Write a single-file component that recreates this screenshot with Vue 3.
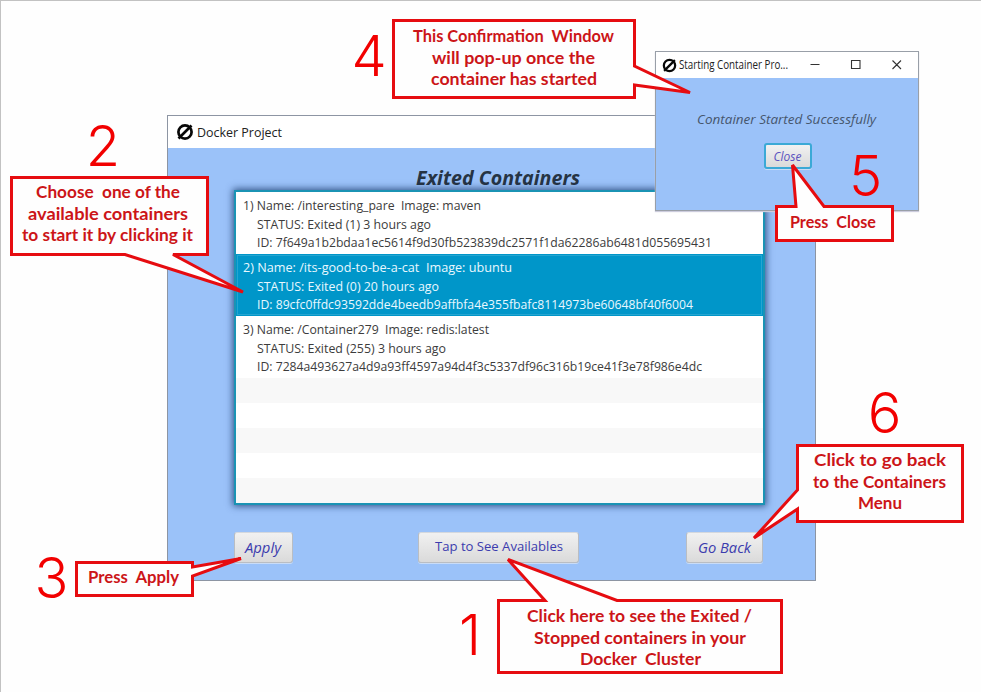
<script setup>
const containers = [
  {
    head: '1) Name: /interesting_pare  Image: maven',
    status: 'STATUS: Exited (1) 3 hours ago',
    id: 'ID: 7f649a1b2bdaa1ec5614f9d30fb523839dc2571f1da62286ab6481d055695431',
    widths: [238, 174, 455]
  },
  {
    head: '2) Name: /its-good-to-be-a-cat  Image: ubuntu',
    status: 'STATUS: Exited (0) 20 hours ago',
    id: 'ID: 89cfc0ffdc93592dde4beedb9affbfa4e355fbafc8114973be60648bf40f6004',
    widths: [269, 182, 436],
    selected: true
  },
  {
    head: '3) Name: /Container279  Image: redis:latest',
    status: 'STATUS: Exited (255) 3 hours ago',
    id: 'ID: 7284a493627a4d9a93ff4597a94d4f3c5337df96c316b19ce41f3e78f986e4dc',
    widths: [246, 189, 445]
  }
]

const rowLines = (c) => [
  { text: c.head, x: 7, y: 18, w: c.widths[0] },
  { text: c.status, x: 21, y: 37, w: c.widths[1] },
  { text: c.id, x: 21, y: 55, w: c.widths[2] }
]

const callouts = [
  {
    step: '1', sx: 469, sy: 655,
    path: 'M498.5 600.5H545L508 559.5L617 600.5H781.5V672.5H498.5Z',
    lines: [
      ['Click here to see the Exited /', 527, 622, 225],
      ['Stopped containers in your', 534, 644, 212],
      ['Docker  Cluster', 580, 665, 121]
    ]
  },
  {
    step: '2', sx: 102, sy: 166,
    path: 'M11.5 177.5H207.5V254.5H173L243 292L125 254.5H11.5Z',
    lines: [
      ['Choose  one of the', 36, 198, 144],
      ['available containers', 28, 220, 160],
      ['to start it by clicking it', 22, 241, 171]
    ]
  },
  {
    step: '3', sx: 50.5, sy: 598,
    path: 'M76.5 562.5H192.5V567L241 558.5L192.5 576V595.5H76.5Z',
    lines: [['Press  Apply', 88, 583, 91]]
  },
  {
    step: '4', sx: 368, sy: 76,
    path: 'M393.5 20.5H634.5V66L690 92.5L634.5 85V97.5H393.5Z',
    lines: [
      ['This Confirmation  Window', 413, 42, 201],
      ['will pop-up once the', 432, 64, 163],
      ['container has started', 431, 85, 166]
    ]
  },
  {
    step: '5', sx: 864.5, sy: 196,
    path: 'M776.5 206.5H796L792.5 165L824 206.5H892.5V240.5H776.5Z',
    lines: [['Press  Close', 790, 228, 86]]
  },
  {
    step: '6', sx: 883.5, sy: 433,
    path: 'M797.5 445.5H962.5V521.5H797.5V509L754 538L797.5 490Z',
    lines: [
      ['Click to go back', 814, 466, 132],
      ['to the Containers', 813, 488, 133],
      ['Menu', 858, 509, 44]
    ]
  }
]
</script>

<template>
  <main class="canvas">
    <section class="window main-window">
      <header class="titlebar">
        <svg class="logo" width="18" height="18" viewBox="0 0 18 18"><circle cx="9" cy="9" r="6.6" /><path d="M2.500 15.500L15.500 2.500" /></svg>
        <svg class="label" width="90" height="20"><text x="0" y="14.500" textLength="85" lengthAdjust="spacingAndGlyphs">Docker Project</text></svg>
      </header>
      <div class="body">
        <h1><svg width="170" height="28"><text x="3" y="21" textLength="164" lengthAdjust="spacingAndGlyphs">Exited Containers</text></svg></h1>
        <div class="list">
          <div v-for="c in containers" :key="c.id" class="row" :class="{ selected: c.selected }">
            <svg width="527" height="62">
              <text v-for="l in rowLines(c)" :key="l.text" :x="l.x" :y="l.y" :textLength="l.w" lengthAdjust="spacingAndGlyphs">{{ l.text }}</text>
            </svg>
          </div>
          <div v-for="n in 5" :key="n" class="empty"></div>
        </div>
        <footer class="actions">
          <button class="italic apply"><svg width="40" height="24"><text x="2" y="17" textLength="36" lengthAdjust="spacingAndGlyphs">Apply</text></svg></button>
          <button class="tap"><svg width="130" height="24"><text x="1" y="15" textLength="128" lengthAdjust="spacingAndGlyphs">Tap to See Availables</text></svg></button>
          <button class="italic back"><svg width="56" height="24"><text x="1" y="17" textLength="53" lengthAdjust="spacingAndGlyphs">Go Back</text></svg></button>
        </footer>
      </div>
    </section>

    <section class="window dialog">
      <header class="titlebar">
        <svg class="logo" width="15" height="15" viewBox="0 0 18 18"><circle cx="9" cy="9" r="6.8" /><path d="M2.500 15.500L15.500 2.500" /></svg>
        <svg class="label" width="112" height="20"><text x="0" y="14" textLength="109" lengthAdjust="spacingAndGlyphs">Starting Container Pro...</text></svg>
        <svg class="controls" width="100" height="20"><path d="M8.500 9.500H17.500M49.500 5.500H58V13.500H49.500ZM90.500 5.500L99 14M99 5.500L90.500 14" /></svg>
      </header>
      <div class="body">
        <svg class="message" width="184" height="20"><text x="2" y="14" textLength="179" lengthAdjust="spacingAndGlyphs">Container Started Successfully</text></svg>
        <button class="italic close"><svg width="30" height="20"><text x="0.500" y="15" textLength="28" lengthAdjust="spacingAndGlyphs">Close</text></svg></button>
      </div>
    </section>

    <svg class="annotations" width="981" height="692">
      <g v-for="c in callouts" :key="c.step">
        <path :d="c.path" />
        <text class="step" :x="c.sx" :y="c.sy">{{ c.step }}</text>
        <text v-for="l in c.lines" :key="l[0]" class="note" :x="l[1]" :y="l[2]" :textLength="l[3]" lengthAdjust="spacingAndGlyphs">{{ l[0] }}</text>
      </g>
    </svg>
  </main>
</template>

<style>
body { margin: 0; background: #fefefe; }
</style>

<style scoped>
.canvas {
  position: relative;
  box-sizing: border-box;
  width: 981px;
  height: 692px;
  overflow: hidden;
  background: #fefefe;
  border-top: 1px solid #c2c2c2;
  border-left: 1px solid #c2c2c2;
  font-family: "Open Sans", "Noto Sans", sans-serif;
}
svg { overflow: visible; }
text { white-space: pre; }
.window {
  position: absolute;
  box-sizing: border-box;
  display: flex;
  flex-direction: column;
  border: 1px solid #8d95a3;
  background: #9bc2f9;
}
.main-window { left: 166px; top: 114px; width: 649px; height: 466px; }
.dialog { left: 654px; top: 50px; width: 264px; height: 160px; border-color: #999fa8; box-shadow: 0 1px 1px #ccd; }
.titlebar { display: flex; align-items: center; background: #fff; }
.main-window .titlebar { height: 32px; padding-left: 8px; gap: 3px; }
.dialog .titlebar { height: 26px; padding-left: 6px; gap: 2px; }
.logo { fill: none; stroke: #080808; stroke-width: 2.7; }
.label { font-size: 13px; fill: #222; }
.dialog .label { font-size: 12px; }
.controls { margin-left: 9px; fill: none; stroke: #333; stroke-width: 1.1; }
.body { display: flex; flex: 1; flex-direction: column; align-items: center; }
h1 {
  margin: 16px 0 0 13px;
  height: 26px;
  font-size: 20px;
  font-style: italic;
  font-weight: 700;
  fill: #263444;
}
.list {
  box-sizing: border-box;
  width: 531px;
  height: 315px;
  margin-left: 15px;
  border: 2px solid #1b93b4;
  background: #fff;
  box-shadow: 0 0 7px 1px rgba(10, 40, 90, 0.75);
}
.row { height: 62px; font-size: 13.5px; fill: #3c3c3c; }
.row svg { display: block; }
.row.selected { background: #0096c9; fill: #e9f8ff; box-shadow: inset 0 0 0 1px #0096c9, inset 0 0 0 2px #25a5d0; }
.empty { height: 25px; background: #fff; }
.empty:nth-child(even) { background: #f8f8f8; }
.actions {
  box-sizing: border-box;
  display: flex;
  align-items: flex-start;
  width: 529px;
  margin: 27px 0 0 14px;
}
button {
  display: flex;
  align-items: center;
  justify-content: center;
  box-sizing: border-box;
  height: 31px;
  padding: 0;
  border: 1px solid #b9bdc3;
  border-top-color: #d4d8de;
  border-radius: 3px;
  background: linear-gradient(#f1f1f1, #dadada);
  box-shadow: 0 1px 0 #c9dcf7;
  font-family: inherit;
  fill: #3c3cae;
}
.italic { font-style: italic; font-size: 15px; }
.tap { width: 162px; margin-left: 125px; font-size: 13.5px; }
.apply { width: 59px; }
.back { width: 77px; margin-left: 107px; }
.message { margin-top: 32px; font-size: 13.5px; font-style: italic; fill: #46566d; }
.close {
  width: 48px;
  height: 26px;
  margin-top: 13px;
  margin-left: 1px;
  border: 2px solid #3ba9d6;
  font-size: 12.5px;
  fill: #5b52c0;
}
.annotations { position: absolute; left: -1px; top: -1px; font-family: Lato, sans-serif; }
.annotations path { fill: #fefefe; stroke: #e60c10; stroke-width: 3; stroke-miterlimit: 3; }
.step { font-family: Inter, sans-serif; font-size: 56px; font-weight: 300; letter-spacing: -2px; fill: #f20000; text-anchor: middle; }
.note { font-size: 17px; font-weight: 700; fill: #cc1518; }
</style>
